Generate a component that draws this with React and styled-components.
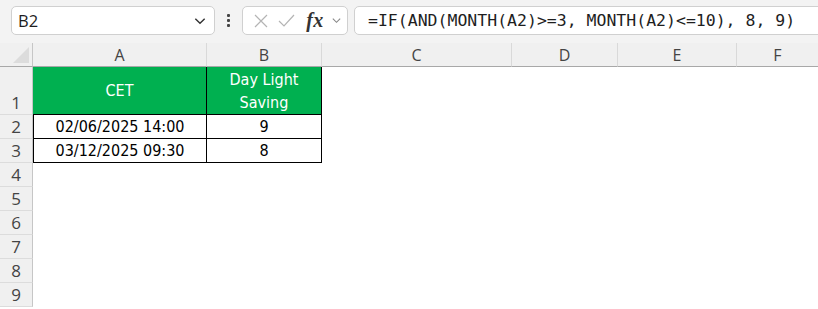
import React from "react";
import styled, { createGlobalStyle } from "styled-components";

const GlobalStyle = createGlobalStyle`
  html, body { margin: 0; padding: 0; background: #ffffff; }
  * { box-sizing: border-box; }
`;

const Page = styled.div`
  width: 818px;
  height: 309px;
  overflow: hidden;
  background: #ffffff;
  font-family: "Liberation Sans", Arial, sans-serif;
`;

const Toolbar = styled.div`
  height: 43px;
  background: #f3f3f3;
  display: flex;
  align-items: flex-start;
  padding: 6px 0 0 11px;
`;

const Box = styled.div`
  height: 29px;
  background: #ffffff;
  border: 1px solid #d0d0d0;
  border-radius: 5px;
  display: flex;
  align-items: center;
`;

const NameBox = styled(Box)`
  width: 204px;
  padding: 0 7px 0 6px;
  justify-content: space-between;
  font-family: "Open Sans", "Noto Sans", sans-serif;
  font-size: 16.5px;
  color: #1e1e1e;
`;

const Dots = styled.div`
  width: 27px;
  height: 29px;
  display: flex;
  flex-direction: column;
  align-items: center;
  justify-content: center;
  gap: 2px;
  span {
    width: 3px;
    height: 3px;
    background: #444;
    border-radius: 1px;
  }
`;

const FxBox = styled(Box)`
  width: 106px;
  padding: 0 0 0 8px;
`;

const IconSlot = styled.div`
  width: ${(p) => p.$w}px;
  display: flex;
  align-items: center;
  justify-content: center;
`;

const FxText = styled.span`
  font-family: "Liberation Serif", "Times New Roman", serif;
  font-style: italic;
  font-weight: bold;
  font-size: 20px;
  color: #333;
  line-height: 1;
  margin-top: -2px;
  letter-spacing: 0.5px;
`;

const FormulaBox = styled(Box)`
  flex: 1;
  margin-left: 6px;
  margin-right: -6px;
  padding-left: 13px;
  font-family: "DejaVu Sans Mono", "Liberation Mono", monospace;
  font-size: 16.5px;
  color: #1e1e1e;
  white-space: nowrap;
`;

const Sheet = styled.div`
  display: grid;
  grid-template-columns: 33px 174px 115px 190px 106px 119px 82px;
  grid-template-rows: 24px 48px repeat(8, 24px);
`;

const Corner = styled.div`
  background: #f0f0f0;
  border-right: 1px solid #c6c6c6;
  border-bottom: 1px solid #a8a8a8;
  position: relative;
  &::after {
    content: "";
    position: absolute;
    right: 3px;
    bottom: 3px;
    width: 0;
    height: 0;
    border-left: 16px solid transparent;
    border-bottom: 16px solid #dcdcdc;
  }
`;

const ColHead = styled.div`
  background: #f0f0f0;
  border-right: 1px solid #d9d9d9;
  border-bottom: 1px solid #a8a8a8;
  display: flex;
  align-items: center;
  justify-content: center;
  font-family: "Open Sans", "Noto Sans", sans-serif;
  font-size: 16px;
  color: #444;
  padding-top: 1px;
`;

const RowHead = styled.div`
  background: #f0f0f0;
  border-right: 1px solid #c6c6c6;
  border-bottom: 1px solid #dcdcdc;
  display: flex;
  align-items: flex-end;
  justify-content: center;
  font-family: "Open Sans", "Noto Sans", sans-serif;
  font-size: 17px;
  line-height: 23px;
  color: #444;
`;

const Cell = styled.div`
  background: ${(p) => (p.$fill ? "#00b050" : "#ffffff")};
  color: ${(p) => (p.$fill ? "#ffffff" : "#000000")};
  border-right: ${(p) => (p.$boxed ? "1px solid #000" : "none")};
  border-bottom: ${(p) => (p.$boxed ? "1px solid #000" : "none")};
  border-left: ${(p) => (p.$first && p.$boxed && !p.$fill ? "1px solid #000" : "none")};
  display: flex;
  align-items: center;
  justify-content: center;
  text-align: center;
  font-family: "Liberation Sans Narrow", "DejaVu Sans Condensed", "Liberation Sans", sans-serif;
  font-size: 16px;
  line-height: 23px;
  white-space: pre-line;
`;

const Chevron = ({ size = 13, color = "#333" }) => (
  <svg width={size} height={size} viewBox="0 0 12 12">
    <polyline points="2,4 6,8 10,4" fill="none" stroke={color} strokeWidth="1.2" />
  </svg>
);

const Cross = () => (
  <svg width="16" height="16" viewBox="0 0 16 16">
    <path d="M2 2 L14 14 M14 2 L2 14" stroke="#b4b4b4" strokeWidth="1.2" fill="none" />
  </svg>
);

const Check = () => (
  <svg width="17" height="14" viewBox="0 0 17 14">
    <polyline points="1,7 6,12 16,1" stroke="#b4b4b4" strokeWidth="1.2" fill="none" />
  </svg>
);

const columns = ["A", "B", "C", "D", "E", "F"];

const rows = [
  { n: 1, a: "CET", b: "Day Light\nSaving", fill: true },
  { n: 2, a: "02/06/2025 14:00", b: "9" },
  { n: 3, a: "03/12/2025 09:30", b: "8" },
  { n: 4 }, { n: 5 }, { n: 6 }, { n: 7 }, { n: 8 }, { n: 9 },
];

export default function App() {
  return (
    <Page>
      <GlobalStyle />
      <Toolbar>
        <NameBox>
          <span>B2</span>
          <Chevron size={14} color="#333" />
        </NameBox>
        <Dots>
          <span />
          <span />
          <span />
        </Dots>
        <FxBox>
          <IconSlot $w={20}><Cross /></IconSlot>
          <IconSlot $w={30}><Check /></IconSlot>
          <IconSlot $w={28}><FxText>fx</FxText></IconSlot>
          <IconSlot $w={14}><Chevron size={11} color="#888" /></IconSlot>
        </FxBox>
        <FormulaBox>=IF(AND(MONTH(A2)&gt;=3, MONTH(A2)&lt;=10), 8, 9)</FormulaBox>
      </Toolbar>
      <Sheet>
        <Corner />
        {columns.map((c) => (
          <ColHead key={c}>{c}</ColHead>
        ))}
        {rows.map((r) => (
          <React.Fragment key={r.n}>
            <RowHead>{r.n}</RowHead>
            <Cell $boxed={!!r.a} $fill={r.fill} $first>{r.a}</Cell>
            <Cell $boxed={!!r.a} $fill={r.fill}>{r.b}</Cell>
            <Cell />
            <Cell />
            <Cell />
            <Cell />
          </React.Fragment>
        ))}
      </Sheet>
    </Page>
  );
}
